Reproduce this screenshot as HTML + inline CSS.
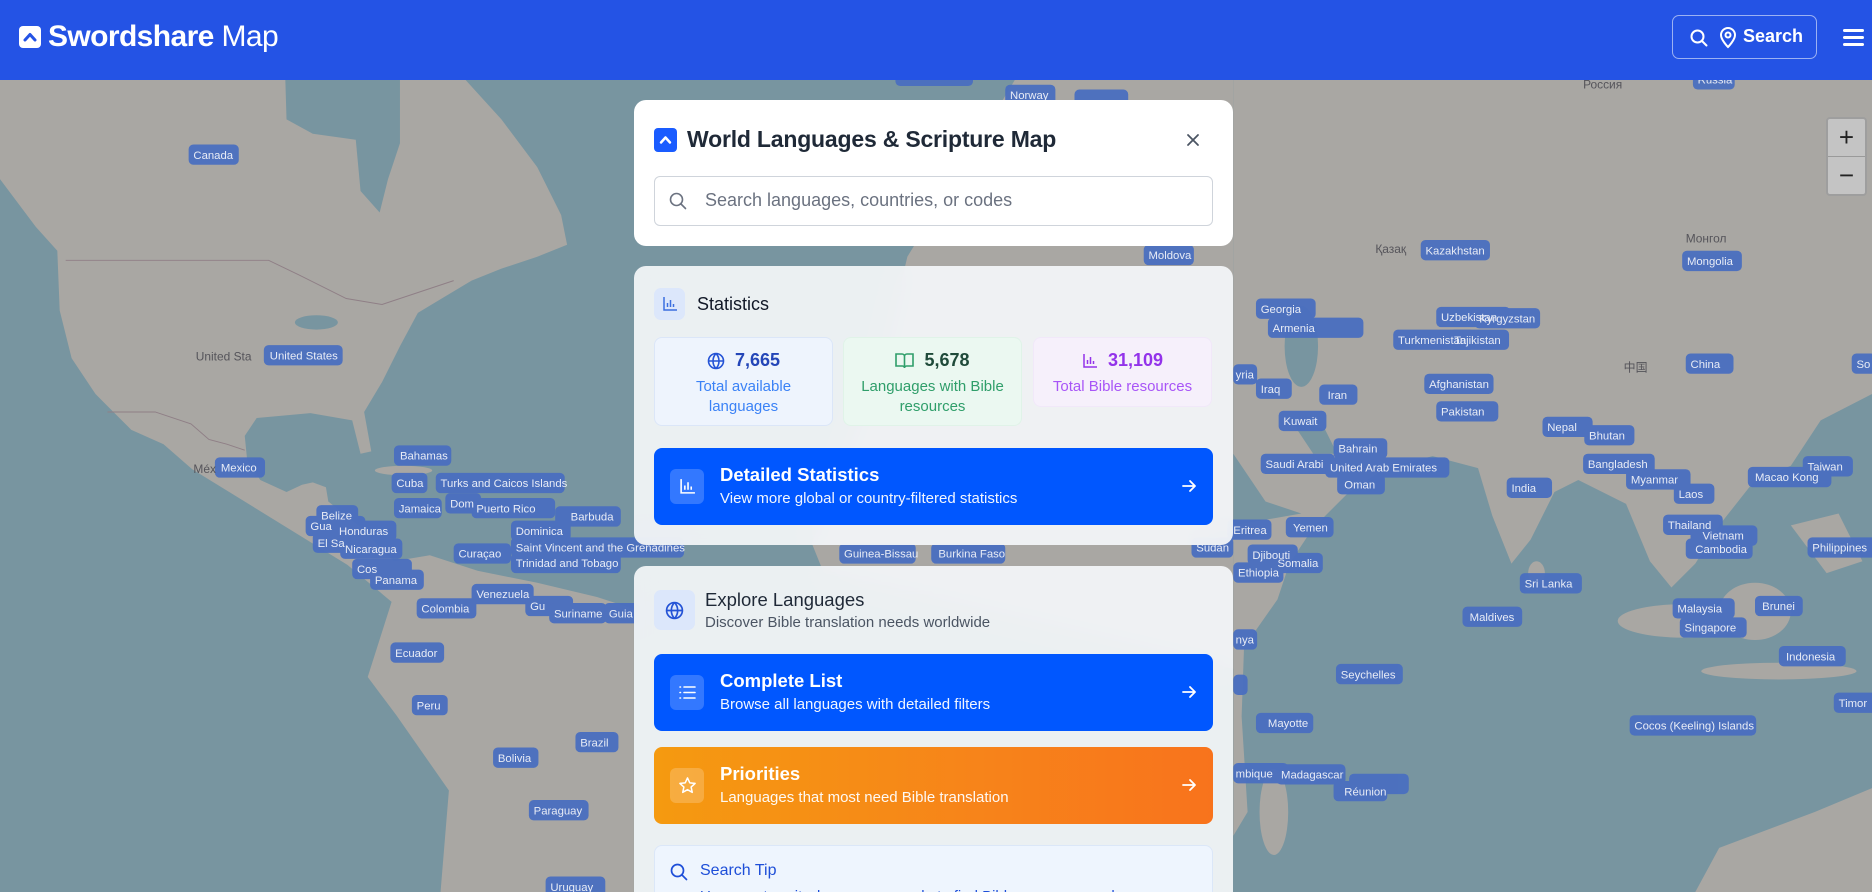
<!DOCTYPE html>
<html><head><meta charset="utf-8"><style>
*{box-sizing:border-box;margin:0;padding:0}
html{width:1872px;height:892px;overflow:hidden}
body{width:1872px;height:892px;overflow:hidden;font-family:"Liberation Sans",sans-serif;background:#7895a0;position:relative}
#map{position:absolute;left:0;top:0;width:1872px;height:892px}
.hdr{position:absolute;left:0;top:0;width:1872px;height:80px;background:#2453e5;color:#fff}
.panel{position:absolute;left:634px;width:599px;border-radius:12px;overflow:hidden}
.p1{top:100px;height:146px;background:#fff}
.p2{top:266px;height:279px;background:rgba(244,246,249,0.93);backdrop-filter:blur(12px)}
.p3{top:566px;height:326px;border-radius:12px 12px 0 0;background:rgba(244,246,249,0.93);backdrop-filter:blur(12px)}
.abs{position:absolute}
.card{position:absolute;top:71px;width:179px;height:89px;border-radius:8px;text-align:center}
.num{font-size:18px;font-weight:bold;margin-top:12px;display:flex;align-items:center;justify-content:center;gap:10px}
.lbl{font-size:15px;line-height:20px;margin-top:6px}
.btn{position:absolute;left:20px;width:559px;height:77px;border-radius:8px;color:#fff}
.btn .ib{position:absolute;left:16px;top:21px;width:34px;height:35px;border-radius:6px;background:rgba(255,255,255,0.2);display:flex;align-items:center;justify-content:center}
.btn .t{position:absolute;left:66px;top:16px;font-size:18.5px;font-weight:bold}
.btn .s{position:absolute;left:66px;top:42px;font-size:15px;opacity:.95}
.btn .ar{position:absolute;right:16px;top:30px}
</style></head><body>
<svg id="map" viewBox="0 0 1568 747" preserveAspectRatio="none" xmlns="http://www.w3.org/2000/svg">
<rect width="1568" height="747" fill="#7895a0"/>
<g fill="#a9a7a3">
<polygon points="0,67 390,67 420,100 450,140 470,180 475,205 450,215 420,225 395,235 370,250 350,262 335,290 320,320 305,345 311,378 302,380 295,352 260,346 215,350 205,365 207,385 218,402 240,412 253,406 262,404 273,408 275,420 300,440 330,470 360,465 400,478 450,488 500,500 531,510 531,747 369,747 376,662 332,599 308,567 328,504 291,473 239,441 161,393 137,372 110,360 95,345 80,330 60,300 50,260 48,210 30,190 0,150"/>
<ellipse cx="338" cy="394" rx="24" ry="4"/>
<polygon points="850,67 1033,67 1033,560 690,480 680,455 700,400 740,300 760,215 800,150"/>
<polygon points="1033,67 1568,67 1568,330 1525,352 1500,390 1470,402 1440,440 1420,472 1400,492 1382,470 1362,422 1322,402 1302,412 1282,452 1266,472 1250,432 1238,392 1200,382 1160,392 1130,412 1100,442 1080,472 1070,502 1042,542 1040,600 1045,680 1033,700"/>
<ellipse cx="1067" cy="680" rx="12" ry="36"/>
<ellipse cx="1410" cy="520" rx="55" ry="14"/>
<ellipse cx="1470" cy="512" rx="30" ry="24"/>
<ellipse cx="1490" cy="562" rx="65" ry="7"/>
<ellipse cx="1287" cy="480" rx="7" ry="10"/>
<polygon points="1440,710 1520,680 1568,660 1568,747 1420,747"/>
<polygon points="1500,440 1540,430 1560,470 1530,480"/>
</g>
<g fill="#7895a0">
<polygon points="239,67 335,67 335,120 325,150 318,178 302,160 298,117 262,112 240,100"/>
<ellipse cx="265" cy="270" rx="18" ry="6"/>
<ellipse cx="1090" cy="290" rx="14" ry="34"/>
<polygon points="1080,350 1110,360 1120,380 1100,380"/>
<polygon points="1033,380 1060,420 1090,430 1033,440"/>
</g>
<g fill="none" stroke="#8f7f86" stroke-width="0.8">
<path d="M55,218 L225,218 L250,230 L290,250 L320,255 L380,235"/>
<path d="M90,345 L130,345 L160,355 L175,368 L190,372 L205,377"/>
</g>
<g font-family="Liberation Sans, sans-serif" font-size="9.5" fill="#e8ecf6">
<g fill="#4a6fc0" opacity="0.95">
<rect x="158" y="121" width="42" height="17" rx="4"/><rect x="221" y="289" width="66" height="17" rx="4"/><rect x="180" y="383" width="42" height="17" rx="4"/>
<rect x="330" y="373" width="48" height="17" rx="4"/><rect x="328" y="396" width="30" height="17" rx="4"/><rect x="365" y="396" width="108" height="17" rx="4"/>
<rect x="330" y="417" width="40" height="17" rx="4"/><rect x="373" y="413" width="30" height="17" rx="4"/><rect x="395" y="417" width="70" height="17" rx="4"/><rect x="465" y="424" width="55" height="17" rx="4"/>
<rect x="428" y="436" width="50" height="17" rx="4"/><rect x="428" y="450" width="145" height="17" rx="4"/><rect x="428" y="463" width="92" height="17" rx="4"/>
<rect x="265" y="423" width="35" height="17" rx="4"/><rect x="256" y="432" width="50" height="17" rx="4"/><rect x="280" y="436" width="52" height="17" rx="4"/><rect x="262" y="446" width="50" height="17" rx="4"/><rect x="285" y="451" width="52" height="17" rx="4"/><rect x="295" y="468" width="50" height="17" rx="4"/><rect x="310" y="477" width="45" height="17" rx="4"/>
<rect x="380" y="455" width="48" height="17" rx="4"/><rect x="395" y="489" width="52" height="17" rx="4"/><rect x="349" y="501" width="50" height="17" rx="4"/><rect x="440" y="499" width="40" height="17" rx="4"/><rect x="460" y="505" width="48" height="17" rx="4"/><rect x="506" y="505" width="30" height="17" rx="4"/>
<rect x="327" y="538" width="45" height="17" rx="4"/><rect x="345" y="582" width="30" height="17" rx="4"/><rect x="482" y="613" width="36" height="17" rx="4"/><rect x="413" y="626" width="38" height="17" rx="4"/><rect x="443" y="670" width="50" height="17" rx="4"/><rect x="457" y="734" width="50" height="17" rx="4"/>
<rect x="750" y="60" width="65" height="12" rx="4"/><rect x="842" y="71" width="42" height="17" rx="4"/><rect x="900" y="75" width="45" height="17" rx="4"/>
<rect x="1190" y="201" width="58" height="17" rx="4"/><rect x="1418" y="58" width="35" height="17" rx="4"/><rect x="1409" y="210" width="50" height="17" rx="4"/><rect x="958" y="205" width="42" height="17" rx="4"/>
<rect x="1052" y="250" width="50" height="17" rx="4"/><rect x="1062" y="266" width="80" height="17" rx="4"/><rect x="1203" y="257" width="62" height="17" rx="4"/><rect x="1235" y="258" width="55" height="17" rx="4"/><rect x="1167" y="276" width="68" height="17" rx="4"/><rect x="1214" y="276" width="50" height="17" rx="4"/>
<rect x="1033" y="305" width="20" height="17" rx="4"/><rect x="1052" y="317" width="30" height="17" rx="4"/><rect x="1105" y="322" width="32" height="17" rx="4"/><rect x="1193" y="313" width="58" height="17" rx="4"/><rect x="1203" y="336" width="52" height="17" rx="4"/><rect x="1071" y="344" width="40" height="17" rx="4"/>
<rect x="1292" y="349" width="42" height="17" rx="4"/><rect x="1327" y="356" width="42" height="17" rx="4"/><rect x="1412" y="296" width="40" height="17" rx="4"/><rect x="1551" y="296" width="20" height="17" rx="4"/>
<rect x="1117" y="367" width="45" height="17" rx="4"/><rect x="1056" y="380" width="62" height="17" rx="4"/><rect x="1110" y="383" width="104" height="17" rx="4"/><rect x="1120" y="397" width="40" height="17" rx="4"/>
<rect x="1326" y="380" width="60" height="17" rx="4"/><rect x="1362" y="393" width="54" height="17" rx="4"/><rect x="1402" y="405" width="34" height="17" rx="4"/><rect x="1262" y="400" width="38" height="17" rx="4"/>
<rect x="1510" y="382" width="42" height="17" rx="4"/><rect x="1464" y="391" width="70" height="17" rx="4"/><rect x="1393" y="431" width="50" height="17" rx="4"/><rect x="1416" y="440" width="56" height="17" rx="4"/><rect x="1412" y="451" width="56" height="17" rx="4"/><rect x="1514" y="450" width="58" height="17" rx="4"/>
<rect x="1028" y="435" width="37" height="17" rx="4"/><rect x="1077" y="433" width="40" height="17" rx="4"/><rect x="1045" y="456" width="42" height="17" rx="4"/><rect x="1066" y="463" width="42" height="17" rx="4"/><rect x="1033" y="471" width="42" height="17" rx="4"/><rect x="998" y="450" width="35" height="17" rx="4"/>
<rect x="1273" y="480" width="52" height="17" rx="4"/><rect x="1225" y="508" width="50" height="17" rx="4"/><rect x="1401" y="501" width="52" height="17" rx="4"/><rect x="1470" y="499" width="40" height="17" rx="4"/><rect x="1407" y="517" width="56" height="17" rx="4"/><rect x="1490" y="541" width="56" height="17" rx="4"/>
<rect x="1033" y="527" width="20" height="17" rx="4"/><rect x="1119" y="556" width="56" height="17" rx="4"/><rect x="1033" y="565" width="12" height="17" rx="4"/><rect x="1052" y="597" width="48" height="17" rx="4"/>
<rect x="1033" y="639" width="46" height="17" rx="4"/><rect x="1069" y="640" width="58" height="17" rx="4"/><rect x="1130" y="648" width="50" height="17" rx="4"/><rect x="1117" y="654" width="45" height="17" rx="4"/><rect x="1365" y="599" width="106" height="17" rx="4"/><rect x="1536" y="580" width="36" height="17" rx="4"/>
<rect x="703" y="455" width="64" height="17" rx="4"/><rect x="780" y="455" width="62" height="17" rx="4"/>
</g>
<text x="162" y="133">Canada</text><text x="226" y="301">United States</text><text x="185" y="395">Mexico</text><text x="335" y="385">Bahamas</text><text x="332" y="408">Cuba</text><text x="369" y="408">Turks and Caicos Islands</text>
<text x="334" y="429">Jamaica</text><text x="377" y="425">Dom</text><text x="399" y="429">Puerto Rico</text><text x="478" y="436">Barbuda</text><text x="432" y="448">Dominica</text><text x="432" y="462">Saint Vincent and the Grenadines</text><text x="432" y="475">Trinidad and Tobago</text>
<text x="269" y="435">Belize</text><text x="260" y="444">Gua</text><text x="284" y="448">Honduras</text><text x="266" y="458">El Sa</text><text x="289" y="463">Nicaragua</text><text x="299" y="480">Cos</text><text x="314" y="489">Panama</text>
<text x="384" y="467">Curaçao</text><text x="399" y="501">Venezuela</text><text x="353" y="513">Colombia</text><text x="444" y="511">Gu</text><text x="464" y="517">Suriname</text><text x="510" y="517">Guia</text>
<text x="331" y="550">Ecuador</text><text x="349" y="594">Peru</text><text x="486" y="625">Brazil</text><text x="417" y="638">Bolivia</text><text x="447" y="682">Paraguay</text><text x="461" y="746">Uruguay</text>
<text x="846" y="83">Norway</text><text x="1194" y="213">Kazakhstan</text><text x="1422" y="70">Russia</text><text x="1413" y="222">Mongolia</text><text x="962" y="217">Moldova</text>
<text x="1056" y="262">Georgia</text><text x="1066" y="278">Armenia</text><text x="1207" y="269">Uzbekistan</text><text x="1239" y="270">Kyrgyzstan</text><text x="1171" y="288">Turkmenistan</text><text x="1218" y="288">Tajikistan</text>
<text x="1035" y="317">yria</text><text x="1056" y="329">Iraq</text><text x="1112" y="334">Iran</text><text x="1197" y="325">Afghanistan</text><text x="1207" y="348">Pakistan</text><text x="1075" y="356">Kuwait</text>
<text x="1296" y="361">Nepal</text><text x="1331" y="368">Bhutan</text><text x="1416" y="308">China</text><text x="1555" y="308">So</text>
<text x="1121" y="379">Bahrain</text><text x="1060" y="392">Saudi Arabi</text><text x="1114" y="395">United Arab Emirates</text><text x="1126" y="409">Oman</text>
<text x="1330" y="392">Bangladesh</text><text x="1366" y="405">Myanmar</text><text x="1406" y="417">Laos</text><text x="1266" y="412">India</text>
<text x="1514" y="394">Taiwan</text><text x="1470" y="403">Macao Kong</text><text x="1397" y="443">Thailand</text><text x="1426" y="452">Vietnam</text><text x="1420" y="463">Cambodia</text><text x="1518" y="462">Philippines</text>
<text x="1033" y="447">Eritrea</text><text x="1083" y="445">Yemen</text><text x="1049" y="468">Djibouti</text><text x="1070" y="475">Somalia</text><text x="1037" y="483">Ethiopia</text><text x="1002" y="462">Sudan</text>
<text x="1277" y="492">Sri Lanka</text><text x="1231" y="520">Maldives</text><text x="1405" y="513">Malaysia</text><text x="1476" y="511">Brunei</text><text x="1411" y="529">Singapore</text><text x="1496" y="553">Indonesia</text>
<text x="1035" y="539">nya</text><text x="1123" y="568">Seychelles</text><text x="1062" y="609">Mayotte</text><text x="1035" y="651">mbique</text><text x="1073" y="652">Madagascar</text><text x="1126" y="666">Réunion</text><text x="1369" y="611">Cocos (Keeling) Islands</text><text x="1540" y="592">Timor</text>
<text x="707" y="467">Guinea-Bissau</text><text x="786" y="467">Burkina Faso</text>
</g>
<g font-family="Liberation Sans, sans-serif" font-size="10" fill="#55545a">
<text x="164" y="302">United Sta</text><text x="162" y="396">Méx</text><text x="1326" y="74">Россия</text><text x="1412" y="203">Монгол</text><text x="1152" y="212">Қазақ</text><text x="1360" y="311">中国</text>
</g>
</svg>

<div class="hdr">
  <div class="abs" style="left:19px;top:26px;width:22px;height:22px;background:#fff;border-radius:4px">
    <svg width="22" height="22" viewBox="0 0 22 22"><path d="M6 14 L11 8.5 L16 14" fill="none" stroke="#2453e5" stroke-width="3" stroke-linecap="round" stroke-linejoin="round"/></svg>
  </div>
  <div class="abs" style="left:48px;top:20px;font-size:30px;letter-spacing:-0.6px;white-space:nowrap"><b>Swordshare</b><span style="font-weight:normal"> Map</span></div>
  <div class="abs" style="left:1672px;top:15px;width:145px;height:44px;border:1.5px solid rgba(255,255,255,0.55);border-radius:7px">
    <svg class="abs" style="left:16px;top:12px" width="20" height="20" viewBox="0 0 20 20" fill="none" stroke="#fff" stroke-width="2"><circle cx="8.5" cy="8.5" r="6"/><path d="M13 13l4.5 4.5" stroke-linecap="round"/></svg>
    <svg class="abs" style="left:46px;top:10px" width="18" height="23" viewBox="0 0 18 23" fill="none" stroke="#fff" stroke-width="2"><path d="M9 21s-7-7-7-12a7 7 0 0 1 14 0c0 5-7 12-7 12z"/><circle cx="9" cy="9" r="2.5"/></svg>
    <div class="abs" style="left:70px;top:10px;font-size:18px;font-weight:bold">Search</div>
  </div>
  <div class="abs" style="left:1843px;top:29px;width:21px;height:3px;background:#fff;border-radius:2px"></div>
  <div class="abs" style="left:1843px;top:36px;width:21px;height:3px;background:#fff;border-radius:2px"></div>
  <div class="abs" style="left:1843px;top:43px;width:21px;height:3px;background:#fff;border-radius:2px"></div>
</div>

<div class="abs" style="left:1826px;top:117px;width:41px;height:79px;background:#c4c4c4;border:2px solid #9e9e9e;border-radius:4px">
  <div style="height:38px;border-bottom:1px solid #9a9a9a;text-align:center;font-size:26px;line-height:36px;color:#222">+</div>
  <div style="text-align:center;font-size:26px;line-height:36px;color:#222">−</div>
</div>

<div class="panel p1">
  <div class="abs" style="left:20px;top:28px;width:23px;height:24px;background:#1a5cff;border-radius:4px">
    <svg width="23" height="24" viewBox="0 0 23 24"><path d="M7 14.5 L11.5 9.5 L16 14.5" fill="none" stroke="#fff" stroke-width="2.5" stroke-linecap="round" stroke-linejoin="round"/></svg>
  </div>
  <div class="abs" style="left:53px;top:26px;font-size:23px;font-weight:bold;color:#1f2937;letter-spacing:-0.2px">World Languages &amp; Scripture Map</div>
  <svg class="abs" style="left:552px;top:33px" width="14" height="14" viewBox="0 0 14 14" stroke="#4b5563" stroke-width="1.8" stroke-linecap="round"><path d="M2 2l10 10M12 2L2 12"/></svg>
  <div class="abs" style="left:20px;top:76px;width:559px;height:50px;border:1px solid #cfd4db;border-radius:6px">
    <svg class="abs" style="left:14px;top:15px" width="18" height="19" viewBox="0 0 18 19" fill="none" stroke="#6b7280" stroke-width="1.6"><circle cx="7.5" cy="7.5" r="6"/><path d="M12 12l4.5 4.5" stroke-linecap="round"/></svg>
    <div class="abs" style="left:50px;top:13px;font-size:18px;color:#6b7280">Search languages, countries, or codes</div>
  </div>
</div>

<div class="panel p2">
  <div class="abs" style="left:20px;top:22px;width:31px;height:32px;background:#dce7fb;border-radius:7px;display:flex;align-items:center;justify-content:center">
    <svg width="16" height="16" viewBox="0 0 16 16" fill="none" stroke="#3b6fe0" stroke-width="1.5"><path d="M2 1v13h13M5.5 11V7M8.5 11V4M11.5 11V8"/></svg>
  </div>
  <div class="abs" style="left:63px;top:28px;font-size:18px;color:#111827">Statistics</div>
  <div class="card" style="left:20px;background:#eef4fd;border:1px solid #dbe6f8">
    <div class="num" style="color:#2446b8"><svg width="18" height="18" viewBox="0 0 18 18" fill="none" stroke="#2453d6" stroke-width="1.6"><circle cx="9" cy="9" r="7.5"/><path d="M1.5 9h15M9 1.5c-4 4-4 11 0 15M9 1.5c4 4 4 11 0 15"/></svg>7,665</div>
    <div class="lbl" style="color:#3b82f6">Total available<br>languages</div>
  </div>
  <div class="card" style="left:209px;background:#ebf8f1;border:1px solid #e0f3e8">
    <div class="num" style="color:#1f4a3a"><svg width="19" height="17" viewBox="0 0 19 17" fill="none" stroke="#2f9e6a" stroke-width="1.6"><path d="M1 2h6a2.5 2.5 0 0 1 2.5 2.5V16A2 2 0 0 0 7.5 14H1zM18 2h-6a2.5 2.5 0 0 0-2.5 2.5V16a2 2 0 0 1 2-2H18z"/></svg>5,678</div>
    <div class="lbl" style="color:#2f9e6a">Languages with Bible<br>resources</div>
  </div>
  <div class="card" style="left:399px;height:70px;background:#f6f0fb;border:1px solid #f1e8f9">
    <div class="num" style="color:#9333ea"><svg width="16" height="16" viewBox="0 0 16 16" fill="none" stroke="#9333ea" stroke-width="1.5"><path d="M2 1v13h13M5.5 11V7M8.5 11V4M11.5 11V8"/></svg>31,109</div>
    <div class="lbl" style="color:#a855f7">Total Bible resources</div>
  </div>
  <div class="btn" style="top:182px;background:#0057ff">
    <div class="ib"><svg width="17" height="17" viewBox="0 0 16 16" fill="none" stroke="#fff" stroke-width="1.5"><path d="M2 1v13h13M5.5 11V7M8.5 11V4M11.5 11V8"/></svg></div>
    <div class="t">Detailed Statistics</div>
    <div class="s">View more global or country-filtered statistics</div>
    <svg class="ar" width="16" height="16" viewBox="0 0 16 16" fill="none" stroke="#fff" stroke-width="1.8" stroke-linecap="round" stroke-linejoin="round"><path d="M2 8h12M9 3l5 5-5 5"/></svg>
  </div>
</div>

<div class="panel p3">
  <div class="abs" style="left:20px;top:24px;width:41px;height:40px;background:#dce7fb;border-radius:7px;display:flex;align-items:center;justify-content:center">
    <svg width="19" height="19" viewBox="0 0 18 18" fill="none" stroke="#2453d6" stroke-width="1.6"><circle cx="9" cy="9" r="7.5"/><path d="M1.5 9h15M9 1.5c-4 4-4 11 0 15M9 1.5c4 4 4 11 0 15"/></svg>
  </div>
  <div class="abs" style="left:71px;top:23px;font-size:18.5px;color:#1f2937">Explore Languages</div>
  <div class="abs" style="left:71px;top:48px;font-size:15px;color:#4b5563">Discover Bible translation needs worldwide</div>
  <div class="btn" style="top:88px;background:#0057ff">
    <div class="ib"><svg width="17" height="15" viewBox="0 0 17 15" fill="none" stroke="#fff" stroke-width="1.6" stroke-linecap="round"><path d="M5 2h11M5 7.5h11M5 13h11M1 2h.5M1 7.5h.5M1 13h.5"/></svg></div>
    <div class="t">Complete List</div>
    <div class="s">Browse all languages with detailed filters</div>
    <svg class="ar" width="16" height="16" viewBox="0 0 16 16" fill="none" stroke="#fff" stroke-width="1.8" stroke-linecap="round" stroke-linejoin="round"><path d="M2 8h12M9 3l5 5-5 5"/></svg>
  </div>
  <div class="btn" style="top:181px;background:linear-gradient(90deg,#f59a10,#f7831a 60%,#f8731c)">
    <div class="ib"><svg width="19" height="19" viewBox="0 0 20 20" fill="none" stroke="#fff" stroke-width="1.6" stroke-linejoin="round"><path d="M10 2l2.4 5.2 5.6.6-4.2 3.8 1.2 5.6L10 14.4 5 17.2l1.2-5.6L2 7.8l5.6-.6z"/></svg></div>
    <div class="t">Priorities</div>
    <div class="s">Languages that most need Bible translation</div>
    <svg class="ar" width="16" height="16" viewBox="0 0 16 16" fill="none" stroke="#fff" stroke-width="1.8" stroke-linecap="round" stroke-linejoin="round"><path d="M2 8h12M9 3l5 5-5 5"/></svg>
  </div>
  <div class="abs" style="left:20px;top:279px;width:559px;height:90px;background:#eef5fe;border:1px solid #dbe7f8;border-radius:8px">
    <svg class="abs" style="left:15px;top:17px" width="18" height="19" viewBox="0 0 18 19" fill="none" stroke="#1d4ed8" stroke-width="1.7"><circle cx="7.5" cy="7.5" r="6"/><path d="M12 12l4.5 4.5" stroke-linecap="round"/></svg>
    <div class="abs" style="left:45px;top:16px;font-size:16px;color:#1d4ed8">Search Tip</div>
    <div class="abs" style="left:45px;top:42px;font-size:15px;color:#1d4ed8;white-space:nowrap">Use country, city, language or code to find Bible resources and</div>
  </div>
</div>
</body></html>
